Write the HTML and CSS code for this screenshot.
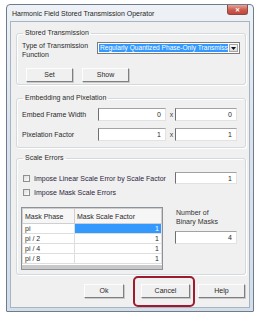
FILE: index.html
```html
<!DOCTYPE html>
<html>
<head>
<meta charset="utf-8">
<link rel="stylesheet" href="styles.css">
</head>
<body>
<div class="window">
  <div class="titlebar">
    <span class="title">Harmonic Field Stored Transmission Operator</span>
    <span class="close">&#x2715;</span>
  </div>
  <div class="client">
    <fieldset class="group g1">
      <legend>Stored Transmission</legend>
      <div class="row type-row">
        <div class="lbl two">Type of Transmission<br>Function</div>
        <div class="combo">
          <span class="combo-sel">Regularly Quantized Phase-Only Transmission</span>
          <span class="combo-arrow"><svg width="5" height="3" viewBox="0 0 5 3"><path d="M0 0H5L2.5 3Z" fill="#111"/></svg></span>
        </div>
      </div>
      <div class="row btn-row">
        <button class="btn btn-set">Set</button>
        <button class="btn btn-show">Show</button>
      </div>
    </fieldset>

    <fieldset class="group g2">
      <legend>Embedding and Pixelation</legend>
      <div class="grid2 r1">
        <span class="lbl">Embed Frame Width</span>
        <span class="inp w1">0</span>
        <span class="x">x</span>
        <span class="inp w2">0</span>
      </div>
      <div class="grid2 r2">
        <span class="lbl">Pixelation Factor</span>
        <span class="inp w1">1</span>
        <span class="x">x</span>
        <span class="inp w2">1</span>
      </div>
    </fieldset>

    <fieldset class="group g3">
      <legend>Scale Errors</legend>
      <div class="chk-row c1">
        <span class="chk"></span>
        <span class="chk-lbl">Impose Linear Scale Error by Scale Factor</span>
        <span class="inp w2">1</span>
      </div>
      <div class="chk-row c2">
        <span class="chk"></span>
        <span class="chk-lbl">Impose Mask Scale Errors</span>
      </div>
      <div class="bottom">
        <div class="grid">
          <table>
            <tr class="hd"><td class="c-a">Mask Phase</td><td class="c-b">Mask Scale Factor</td></tr>
            <tr><td class="c-a">pi</td><td class="c-b num sel">1</td></tr>
            <tr><td class="c-a">pi / 2</td><td class="c-b num">1</td></tr>
            <tr><td class="c-a">pi / 4</td><td class="c-b num">1</td></tr>
            <tr><td class="c-a">pi / 8</td><td class="c-b num">1</td></tr>
          </table>
          <div class="grid-foot"></div>
        </div>
        <div class="masks">
          <div class="lbl two">Number of<br>Binary Masks</div>
          <span class="inp w2">4</span>
        </div>
      </div>
    </fieldset>

    <div class="actions">
      <button class="btn btn-ok">Ok</button>
      <button class="btn btn-cancel">Cancel<span class="highlight"></span></button>
      <button class="btn btn-help">Help</button>
    </div>
  </div>
</div>
</body>
</html>
```

FILE: styles.css
```css
* { box-sizing: border-box; }
body {
  margin: 0;
  background: #fff;
  font-family: "Liberation Sans", Arial, sans-serif;
  font-size: 7px;
  color: #2a2a2a;
}
.window {
  margin: 4px 0 0 6px;
  width: 248px;
  height: 308px;
  border: 1px solid #6d7d8e;
  border-radius: 4px 4px 1px 1px;
  background: linear-gradient(#eef2f6, #dbe4ed 40%, #d4dee9);
  display: flex;
  flex-direction: column;
  padding: 0 3px 3px 3px;
}
.titlebar {
  height: 16px;
  display: flex;
  align-items: flex-start;
  padding-left: 2px;
}
.title {
  margin-top: 4px;
  font-size: 7px;
  line-height: 9px;
  color: #1e1e1e;
}
.close {
  margin-left: auto;
  margin-right: 2px;
  width: 21px;
  height: 10px;
  border: 1px solid #8a4a45;
  border-top: none;
  border-radius: 0 0 3px 3px;
  background: linear-gradient(#e6a49b, #cc5b4c 55%, #c4473a);
  color: #fff;
  font-size: 6px;
  line-height: 10px;
  text-align: center;
  font-weight: bold;
}
.client {
  flex: 1;
  background: #f0f0f0;
  border: 1px solid #a7b4c2;
  padding: 6px 3px 0 5px;
  display: flex;
  flex-direction: column;
}
.group {
  margin: 0;
  padding: 0 0 0 5px;
  border: 1px solid #d4d9dd;
  border-radius: 3px;
  box-shadow: inset 1px 1px 0 #fff, 1px 1px 0 #fff;
  min-width: 0;
}
legend {
  padding: 0 2px;
  margin-left: 1px;
  line-height: 10px;
  color: #2a2a2a;
}
.g1 { height: 57px; }
.g2 { height: 55px; margin-top: 8px; }
.g3 { height: 122px; margin-top: 5px; }

.row { display: flex; align-items: flex-start; }
.lbl { line-height: 9px; white-space: nowrap; }
.type-row { margin-top: 3px; }
.type-row .lbl { width: 75px; }
.combo {
  margin-top: 1px;
  width: 143px;
  height: 12px;
  border: 1px solid #7c7c7c;
  background: #fff;
  display: flex;
  padding: 1px;
}
.combo-sel {
  flex: 1;
  background: #3399ff;
  color: #fff;
  line-height: 8px;
  white-space: nowrap;
  overflow: hidden;
  padding-left: 1px;
  font-size: 6.6px;
}
.combo-arrow {
  width: 9px;
  margin-left: 1px;
  background: linear-gradient(#f6f6f6, #dcdcdc);
  border: 1px solid #a5a5a5;
  display: flex;
  align-items: center;
  justify-content: center;
}
.btn-row { margin-top: 9px; gap: 9px; padding-left: 4px; }
.btn {
  font: inherit;
  color: #2a2a2a;
  background: #f0f0f0;
  border: 1px solid;
  border-color: #fdfdfd #7f7f7f #7f7f7f #fdfdfd;
  box-shadow: 1px 1px 0 #c9c9c9;
  padding: 0;
  height: 14px;
  line-height: 12px;
  text-align: center;
}
.btn-set, .btn-show { width: 47px; }

.grid2 {
  display: grid;
  grid-template-columns: 76px 68px 9px 62px;
  align-items: center;
}
.r1 { margin-top: 5px; }
.r2 { margin-top: 7px; }
.inp {
  display: block;
  height: 13px;
  background: #fff;
  border: 1px solid;
  border-color: #a3a3a3 #e2e2e2 #e2e2e2 #6f6f6f;
  text-align: right;
  padding-right: 4px;
  line-height: 11px;
}
.w1 { width: 68px; }
.w2 { width: 62px; }
.x { text-align: center; padding-left: 2px; color: #444; }

.chk-row { display: flex; align-items: center; }
.c1 { margin-top: 9px; height: 12px; }
.c2 { margin-top: 3px; height: 11px; }
.chk {
  width: 7px;
  height: 7px;
  border: 1px solid #8f8f8f;
  background: linear-gradient(135deg, #dcdcdc, #fdfdfd);
  margin-left: 1px;
}
.chk-lbl { margin-left: 4px; width: 141px; white-space: nowrap; color: #2c2540; }
.c1 .inp { height: 12px; }

.bottom { display: flex; margin-top: 9px; }
.grid {
  margin-left: -1px;
  width: 142px;
  height: 63px;
  border: 1px solid #8d9299;
  background: #fff;
  display: flex;
  flex-direction: column;
}
table {
  border-collapse: collapse;
  width: 140px;
  table-layout: fixed;
}
td {
  border: 1px solid #dedede;
  height: 10px;
  padding: 0 2px;
  line-height: 9px;
  white-space: nowrap;
}
.c-a { width: 52px; }
.hd td {
  height: 15px;
  background: #f6f6f6;
  border-color: #cfcfcf;
}
.num { text-align: right; padding-right: 2px; }
.sel { background: #3399ff; color: #fff; }
.grid-foot {
  margin-top: auto;
  height: 4px;
  background: #c9c9c9;
}
.masks { margin-left: 12px; display: flex; flex-direction: column; }
.masks .lbl { margin-left: 1px; margin-top: 1px; color: #333; }
.masks .inp { margin-top: 5px; }

.actions {
  display: flex;
  justify-content: flex-end;
  margin-top: 9px;
  padding-right: 1px;
}
.btn-ok { width: 40px; }
.btn-cancel { width: 49px; margin-left: 17px; position: relative; }
.btn-help { width: 47px; margin-left: 8px; }
.highlight {
  position: absolute;
  left: -9px;
  top: -9px;
  right: -6px;
  bottom: -10px;
  border: 2px solid #9e1a2c;
  border-radius: 5px;
}
```
